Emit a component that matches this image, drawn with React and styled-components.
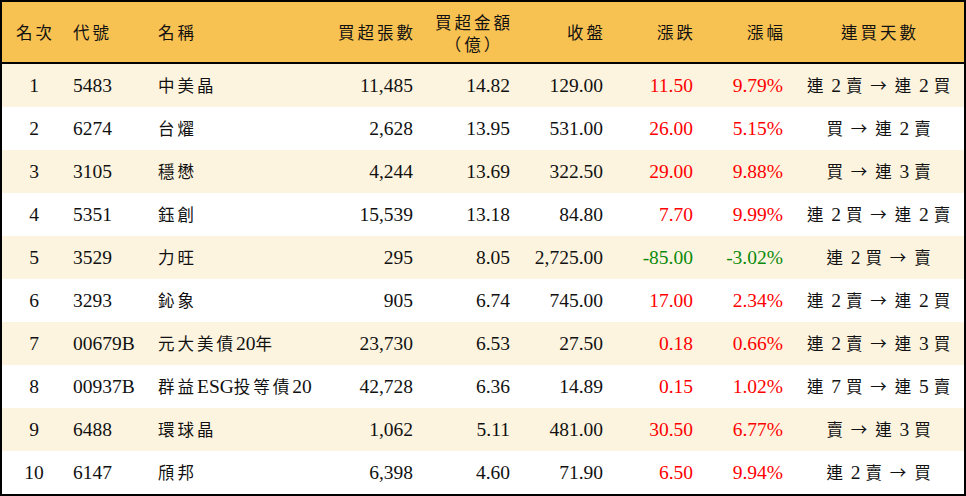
import React from 'react'
import styled, { createGlobalStyle } from 'styled-components'

const GlobalStyle = createGlobalStyle`
    html, body {
        margin: 0;
        padding: 0;
        background: #fff;
    }
`

const Frame = styled.div`
    width: 966px;
    box-sizing: border-box;
    border: 2px solid #000;
    border-right-width: 3px;
    background: #fff;
`

const Table = styled.table`
    width: 100%;
    border-collapse: collapse;
    table-layout: fixed;
    font-family: "Liberation Serif", "Noto Sans CJK TC", serif;
    font-size: 19.5px;
    color: #111;
`

const HeadRow = styled.tr`
    height: 60px;
    background: #f8c252;
    border-bottom: 2px solid #000;
`

const Th = styled.th`
    font-weight: 400;
    padding: 0;
    height: 60px;
    text-align: ${props => props.$align || 'left'};
    padding-left: ${props => props.$pl || 0}px;
    padding-right: ${props => props.$pr || 0}px;
    vertical-align: middle;
    white-space: nowrap;
    line-height: 22px;
`

const Stack = styled.span`
    display: inline-flex;
    flex-direction: column;
    align-items: center;
    gap: 1px;
    line-height: 21px;
    padding-top: 2px;
`

const Row = styled.tr`
    height: 43px;
    background: ${props => (props.$tint ? '#fdf4df' : '#fff')};
`

const Td = styled.td`
    padding: 0;
    height: 43px;
    text-align: ${props => props.$align || 'left'};
    padding-left: ${props => props.$pl || 0}px;
    padding-right: ${props => props.$pr || 0}px;
    color: ${props => props.$color || '#111'};
    white-space: nowrap;
    vertical-align: middle;
    line-height: 24px;
`

const Han = styled.span`
    font-family: "Noto Sans CJK TC", sans-serif;
    font-size: 16.5px;
    letter-spacing: 3px;
    margin-right: ${props => (props.$last ? '-3px' : '0')};
`

const CJK = /([\u3400-\u9fff\uff08\uff09\u2192]+)/
const isCJK = /[\u3400-\u9fff\uff08\uff09\u2192]/

// split a string into CJK runs and latin runs
function mixed(text) {
    const parts = text.split(CJK).filter(p => p !== '')
    return parts.map((p, i) =>
        isCJK.test(p)
            ? <Han key={i} $last={i === parts.length - 1}>{p}</Han>
            : <React.Fragment key={i}>{p}</React.Fragment>
    )
}

const columns = [
    { key: 'rank', title: '名次', width: 64, align: 'center' },
    { key: 'code', title: '代號', width: 84, pl: 7 },
    { key: 'name', title: '名稱', width: 180, pl: 8 },
    { key: 'lots', title: '買超張數', width: 93, align: 'right', pr: 10 },
    { key: 'amount', title: ['買超金額', '（億）'], width: 97, align: 'right', pr: 10 },
    { key: 'close', title: '收盤', width: 93, align: 'right', pr: 10 },
    { key: 'change', title: '漲跌', width: 90, align: 'right', pr: 10, colored: true },
    { key: 'pct', title: '漲幅', width: 90, align: 'right', pr: 10, colored: true },
    { key: 'streak', title: '連買天數', width: 171, align: 'center' },
]

const rows = [
    ['1', '5483', '中美晶', '11,485', '14.82', '129.00', '11.50', '9.79%', '連 2 賣 → 連 2 買'],
    ['2', '6274', '台燿', '2,628', '13.95', '531.00', '26.00', '5.15%', '買 → 連 2 賣'],
    ['3', '3105', '穩懋', '4,244', '13.69', '322.50', '29.00', '9.88%', '買 → 連 3 賣'],
    ['4', '5351', '鈺創', '15,539', '13.18', '84.80', '7.70', '9.99%', '連 2 買 → 連 2 賣'],
    ['5', '3529', '力旺', '295', '8.05', '2,725.00', '-85.00', '-3.02%', '連 2 買 → 賣'],
    ['6', '3293', '鈊象', '905', '6.74', '745.00', '17.00', '2.34%', '連 2 賣 → 連 2 買'],
    ['7', '00679B', '元大美債20年', '23,730', '6.53', '27.50', '0.18', '0.66%', '連 2 賣 → 連 3 買'],
    ['8', '00937B', '群益ESG投等債20', '42,728', '6.36', '14.89', '0.15', '1.02%', '連 7 買 → 連 5 賣'],
    ['9', '6488', '環球晶', '1,062', '5.11', '481.00', '30.50', '6.77%', '賣 → 連 3 買'],
    ['10', '6147', '頎邦', '6,398', '4.60', '71.90', '6.50', '9.94%', '連 2 賣 → 買'],
]

const tone = value => (value.startsWith('-') ? '#0a8a0a' : '#ff0000')

export default function App() {
    return (
        <>
            <GlobalStyle />
            <Frame>
                <Table>
                    <colgroup>
                        {columns.map(c => <col key={c.key} style={{ width: c.width }} />)}
                    </colgroup>
                    <thead>
                        <HeadRow>
                            {columns.map(c => (
                                <Th key={c.key} $align={c.align} $pl={c.pl} $pr={c.pr}>
                                    {Array.isArray(c.title) ? (
                                        <Stack>
                                            <span>{mixed(c.title[0])}</span>
                                            <span>{mixed(c.title[1])}</span>
                                        </Stack>
                                    ) : mixed(c.title)}
                                </Th>
                            ))}
                        </HeadRow>
                    </thead>
                    <tbody>
                        {rows.map((r, i) => (
                            <Row key={r[0]} $tint={i % 2 === 0}>
                                {columns.map((c, j) => (
                                    <Td
                                        key={c.key}
                                        $align={c.align}
                                        $pl={c.pl}
                                        $pr={c.pr}
                                        $color={c.colored ? tone(r[j]) : undefined}
                                    >
                                        {mixed(r[j])}
                                    </Td>
                                ))}
                            </Row>
                        ))}
                    </tbody>
                </Table>
            </Frame>
        </>
    )
}
